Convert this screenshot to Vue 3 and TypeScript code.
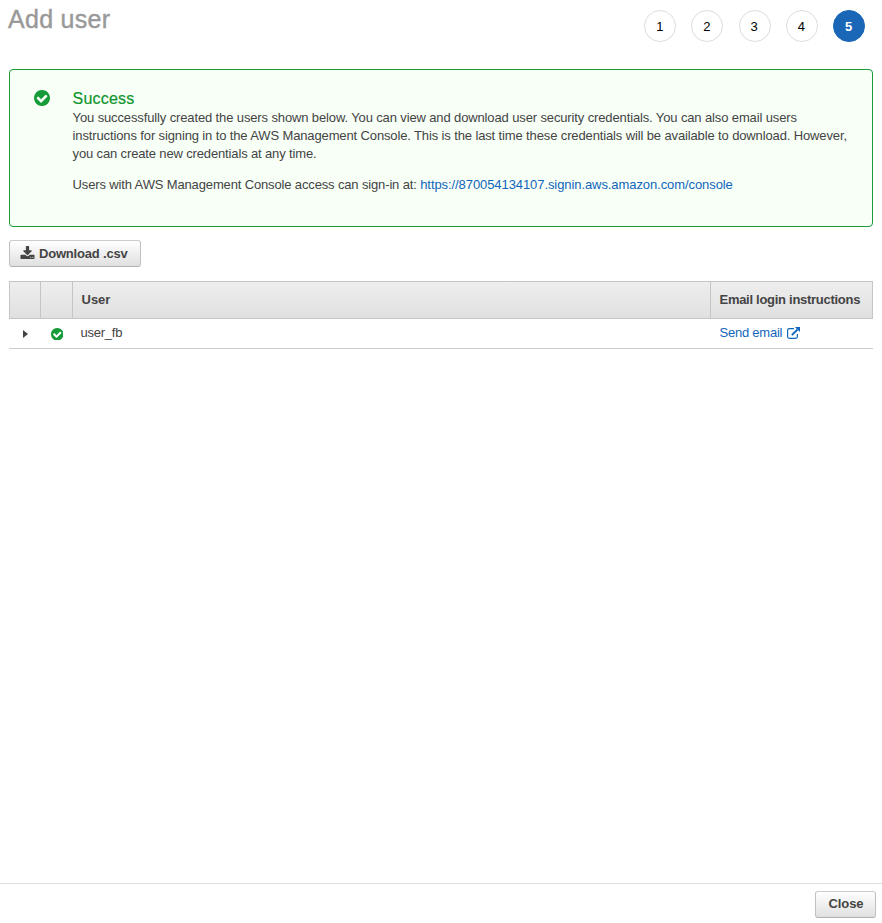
<script setup lang="ts">
interface UserRow {
  name: string
}

const steps: number[] = [1, 2, 3, 4, 5]
const current = 5
const users: UserRow[] = [{ name: 'user_fb' }]
const checkPath =
  'M1284 734q0-28-18-46l-91-90q-19-19-45-19t-45 19l-408 407-226-226q-19-19-45-19t-45 19l-91 90q-18 18-18 46 0 27 18 45l362 362q19 19 45 19 27 0 46-19l543-543q18-18 18-45zm252 162q0 209-103 385.5t-279.5 279.5-385.5 103-385.5-103-279.5-279.5-103-385.5 103-385.5 279.5-279.5 385.5-103 385.5 103 279.5 279.5 103 385.5z'
</script>

<template>
  <div class="page">
    <header class="header">
      <h1 class="title">Add user</h1>
      <ol class="steps">
        <li v-for="s in steps" :key="s" class="step" :class="{ active: s === current }">{{ s }}</li>
      </ol>
    </header>

    <main class="main">
      <section class="alert">
        <svg class="alert-icon" viewBox="0 128 1536 1536"><path :d="checkPath" /></svg>
        <div class="alert-body">
          <h2 class="alert-title">Success</h2>
          <p class="text">
            You successfully created the users shown below. You can view and download user security credentials. You can also email users<br />
            instructions for signing in to the AWS Management Console. This is the last time these credentials will be available to download. However,<br />
            <span class="last-line">you can create new credentials at any time.</span>
          </p>
          <p class="text signin">
            <span class="last-line">Users with AWS Management Console access can sign-in at:</span>&nbsp;<a class="link url">https://870054134107.signin.aws.amazon.com/console</a>
          </p>
        </div>
      </section>

      <button class="btn download">
        <svg class="download-icon" viewBox="64 0 1664 1536">
          <path
            d="M1344 1344q0-26-19-45t-45-19-45 19-19 45 19 45 45 19 45-19 19-45zm256 0q0-26-19-45t-45-19-45 19-19 45 19 45 45 19 45-19 19-45zm128-224v320q0 40-28 68t-68 28h-1472q-40 0-68-28t-28-68v-320q0-40 28-68t68-28h465l135 136q58 56 136 56t136-56l136-136h464q40 0 68 28t28 68zm-325-569q17 41-14 70l-448 448q-18 19-45 19t-45-19l-448-448q-31-29-14-70 17-39 59-39h256v-448q0-26 19-45t45-19h256q26 0 45 19t19 45v448h256q42 0 59 39z"
          />
        </svg>
        <span>Download .csv</span>
      </button>

      <div class="table">
        <div class="row head">
          <div class="cell"></div>
          <div class="cell"></div>
          <div class="cell">User</div>
          <div class="cell email-head">Email login instructions</div>
        </div>
        <div v-for="u in users" :key="u.name" class="row body">
          <div class="cell center">
            <svg class="caret" viewBox="0 0 5 8"><path d="M0 0L5 4L0 8Z" /></svg>
          </div>
          <div class="cell center">
            <svg class="row-check" viewBox="0 128 1536 1536"><path :d="checkPath" /></svg>
          </div>
          <div class="cell name"><span class="label">{{ u.name }}</span></div>
          <div class="cell">
            <a class="link label send">Send email</a>
            <svg class="external" viewBox="0 0 13 12">
              <path class="frame" d="M7 1.6H2.4Q.6 1.6.6 3.4V9.6Q.6 11.4 2.4 11.4H8.6Q10.4 11.4 10.4 9.6V7" />
              <path class="shaft" d="M4.8 8.2L10.5 2.5" />
              <path class="tip" d="M7.9 0H13V5.1Z" />
            </svg>
          </div>
        </div>
      </div>
    </main>

    <footer class="footer">
      <button class="btn close"><span>Close</span></button>
    </footer>
  </div>
</template>

<style>
body {
  margin: 0;
  background: #fff;
}
</style>

<style scoped>
.page {
  box-sizing: border-box;
  height: 923px;
  display: flex;
  flex-direction: column;
  overflow: hidden;
  font-family: 'Liberation Sans', Arial, sans-serif;
  font-size: 13px;
  color: #444;
}
.header {
  display: flex;
  justify-content: space-between;
  height: 69px;
  padding: 0 17px 0 8px;
}
.title {
  margin: 4px 0 0;
  font-size: 25px;
  line-height: 30px;
  font-weight: 400;
  letter-spacing: 0.28px;
  color: #999;
  -webkit-text-stroke: 0.4px #999;
}
.steps {
  display: flex;
  gap: 15.2px;
  margin: 10px 0 0;
  padding: 0;
  list-style: none;
}
.step {
  box-sizing: border-box;
  width: 32px;
  height: 32px;
  padding-right: 1px;
  border: 1px solid #ddd;
  border-radius: 50%;
  line-height: 31px;
  text-align: center;
  color: #000;
}
.step.active {
  border-color: #1a67b7;
  background: #1a67b7;
  color: #fff;
  font-weight: 700;
}
.main {
  flex: 1;
  padding: 0 9px;
}
.alert {
  box-sizing: border-box;
  display: flex;
  height: 158px;
  padding: 20px 20px 0 24px;
  border: 1px solid #1a9a3b;
  border-radius: 4px;
  background: #f7fff7;
}
.alert-icon {
  flex: none;
  width: 16px;
  height: 16px;
  margin: 0 22.6px 0 0;
  fill: #169b39;
}
.alert-title {
  margin: 0;
  font-size: 16px;
  line-height: 18px;
  font-weight: 400;
  letter-spacing: 0.18px;
  color: #0f962c;
  -webkit-text-stroke: 0.2px #0f962c;
}
.text {
  margin: 1px 0 0;
  line-height: 18px;
  letter-spacing: -0.128px;
  white-space: nowrap;
}
.last-line {
  letter-spacing: -0.143px;
}
.signin {
  margin-top: 13px;
}
.link {
  color: #1166bb;
}
.url {
  letter-spacing: -0.08px;
}
.btn {
  box-sizing: border-box;
  display: flex;
  align-items: center;
  justify-content: center;
  height: 27px;
  padding: 0;
  border: 1px solid #c0c0c0;
  border-top-color: #ccc;
  border-bottom-color: #b0b0b0;
  border-radius: 3px;
  background: linear-gradient(#fff, #e0e0e0);
  color: #444;
  font: 700 13px 'Liberation Sans', Arial, sans-serif;
}
.download {
  justify-content: flex-start;
  width: 132px;
  margin-top: 13px;
  padding-left: 9.5px;
  gap: 5px;
  letter-spacing: -0.19px;
}
.download-icon {
  width: 15px;
  height: 13px;
  margin: 0 -0.5px 2px 0;
  fill: #444;
}
.table {
  margin-top: 14px;
}
.row {
  display: grid;
  grid-template-columns: 31px 32px 638px 1fr;
}
.head {
  box-sizing: border-box;
  grid-template-columns: 30px 32px 638px 1fr;
  height: 38px;
  border: 1px solid #c5c5c5;
  background: linear-gradient(#eee, #e0e0e0);
  font-weight: 700;
  line-height: 36px;
}
.head .cell + .cell {
  box-sizing: border-box;
  border-left: 1px solid #c5c5c5;
  padding-left: 8.5px;
}
.email-head {
  letter-spacing: -0.28px;
  white-space: nowrap;
}
.body {
  box-sizing: border-box;
  height: 30px;
  border-bottom: 1px solid #ccc;
  line-height: 28px;
}
.body .cell {
  display: flex;
  align-items: center;
  padding-left: 9.5px;
}
.body .center {
  justify-content: center;
  padding: 0;
}
.body .name {
  padding-left: 8.5px;
}
.label {
  margin-top: -2px;
  letter-spacing: -0.23px;
}
.caret {
  width: 5px;
  height: 8px;
  margin: 1px 0 0 2px;
  fill: #444;
}
.row-check {
  width: 12.5px;
  height: 12.5px;
  margin: 1px 0 0 2px;
  fill: #169b39;
}
.external {
  width: 13px;
  height: 12px;
  margin: 0 0 1px 5px;
  fill: none;
  stroke: #1166bb;
}
.frame {
  stroke-width: 1.2;
}
.shaft {
  stroke-width: 1.8;
}
.tip {
  fill: #1166bb;
  stroke: none;
}
.footer {
  box-sizing: border-box;
  display: flex;
  justify-content: flex-end;
  height: 40px;
  padding: 7px 6px 0 0;
  border-top: 1px solid #ddd;
}
.close {
  width: 61px;
  padding: 0 0 2px 1px;
  letter-spacing: -0.1px;
}
</style>
